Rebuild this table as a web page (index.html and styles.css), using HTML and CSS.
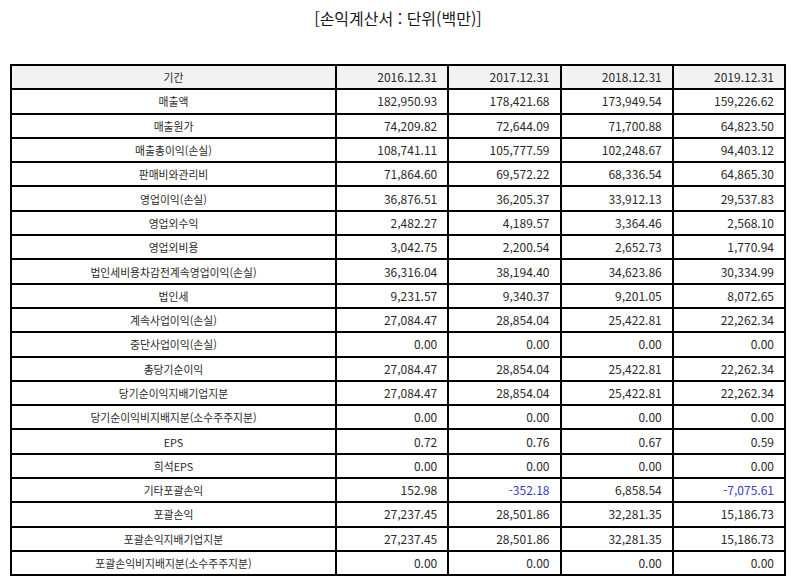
FILE: index.html
```html
<!DOCTYPE html>
<html lang="ko">
<head>
<meta charset="utf-8">
<title>손익계산서</title>
<link rel="stylesheet" href="styles.css">
</head>
<body>
<div class="page">
  <h1 class="title">[손익계산서 : 단위(백만)]</h1>
  <table class="fin">
    <colgroup>
      <col class="c-label"><col><col><col><col>
    </colgroup>
    <thead>
      <tr><th class="label">기간</th><th>2016.12.31</th><th>2017.12.31</th><th>2018.12.31</th><th>2019.12.31</th></tr>
    </thead>
    <tbody>
      <tr><td class="label">매출액</td><td>182,950.93</td><td>178,421.68</td><td>173,949.54</td><td>159,226.62</td></tr>
      <tr><td class="label">매출원가</td><td>74,209.82</td><td>72,644.09</td><td>71,700.88</td><td>64,823.50</td></tr>
      <tr><td class="label">매출총이익(손실)</td><td>108,741.11</td><td>105,777.59</td><td>102,248.67</td><td>94,403.12</td></tr>
      <tr><td class="label">판매비와관리비</td><td>71,864.60</td><td>69,572.22</td><td>68,336.54</td><td>64,865.30</td></tr>
      <tr><td class="label">영업이익(손실)</td><td>36,876.51</td><td>36,205.37</td><td>33,912.13</td><td>29,537.83</td></tr>
      <tr><td class="label">영업외수익</td><td>2,482.27</td><td>4,189.57</td><td>3,364.46</td><td>2,568.10</td></tr>
      <tr><td class="label">영업외비용</td><td>3,042.75</td><td>2,200.54</td><td>2,652.73</td><td>1,770.94</td></tr>
      <tr><td class="label">법인세비용차감전계속영업이익(손실)</td><td>36,316.04</td><td>38,194.40</td><td>34,623.86</td><td>30,334.99</td></tr>
      <tr><td class="label">법인세</td><td>9,231.57</td><td>9,340.37</td><td>9,201.05</td><td>8,072.65</td></tr>
      <tr><td class="label">계속사업이익(손실)</td><td>27,084.47</td><td>28,854.04</td><td>25,422.81</td><td>22,262.34</td></tr>
      <tr><td class="label">중단사업이익(손실)</td><td>0.00</td><td>0.00</td><td>0.00</td><td>0.00</td></tr>
      <tr><td class="label">총당기순이익</td><td>27,084.47</td><td>28,854.04</td><td>25,422.81</td><td>22,262.34</td></tr>
      <tr><td class="label">당기순이익지배기업지분</td><td>27,084.47</td><td>28,854.04</td><td>25,422.81</td><td>22,262.34</td></tr>
      <tr><td class="label">당기순이익비지배지분(소수주주지분)</td><td>0.00</td><td>0.00</td><td>0.00</td><td>0.00</td></tr>
      <tr><td class="label">EPS</td><td>0.72</td><td>0.76</td><td>0.67</td><td>0.59</td></tr>
      <tr><td class="label">희석EPS</td><td>0.00</td><td>0.00</td><td>0.00</td><td>0.00</td></tr>
      <tr><td class="label">기타포괄손익</td><td>152.98</td><td class="neg">-352.18</td><td>6,858.54</td><td class="neg">-7,075.61</td></tr>
      <tr><td class="label">포괄손익</td><td>27,237.45</td><td>28,501.86</td><td>32,281.35</td><td>15,186.73</td></tr>
      <tr><td class="label">포괄손익지배기업지분</td><td>27,237.45</td><td>28,501.86</td><td>32,281.35</td><td>15,186.73</td></tr>
      <tr><td class="label">포괄손익비지배지분(소수주주지분)</td><td>0.00</td><td>0.00</td><td>0.00</td><td>0.00</td></tr>
    </tbody>
  </table>
</div>
</body>
</html>
```

FILE: styles.css
```css
html, body {
  margin: 0;
  padding: 0;
  background: #ffffff;
}

.page {
  padding: 6px 0 0 10px;
  font-family: "Noto Sans CJK KR", "Noto Sans", sans-serif;
  color: #2a2a2a;
}

.title {
  margin: 0 0 34px 0;
  width: 776px;
  text-align: center;
  font-size: 16px;
  font-weight: normal;
  line-height: 24px;
  color: #1a1a1a;
}

.fin {
  width: 776px;
  table-layout: fixed;
  border-collapse: separate;
  border-spacing: 0;
  border: 1px solid #000000;
  font-size: 12px;
}

.c-label {
  width: 325px;
}

.fin th,
.fin td {
  box-sizing: border-box;
  height: 24.3px;
  border: 1px solid #000000;
  padding: 0 10px 0 4px;
  line-height: 16px;
  vertical-align: middle;
  text-align: right;
  font-weight: normal;
  white-space: nowrap;
  overflow: hidden;
}

.fin thead th {
  background: #f2f2f2;
}

.fin .label {
  text-align: center;
  padding: 0 4px;
  font-size: 10.8px;
}

.fin .neg {
  color: #3a3ac4;
}
```
